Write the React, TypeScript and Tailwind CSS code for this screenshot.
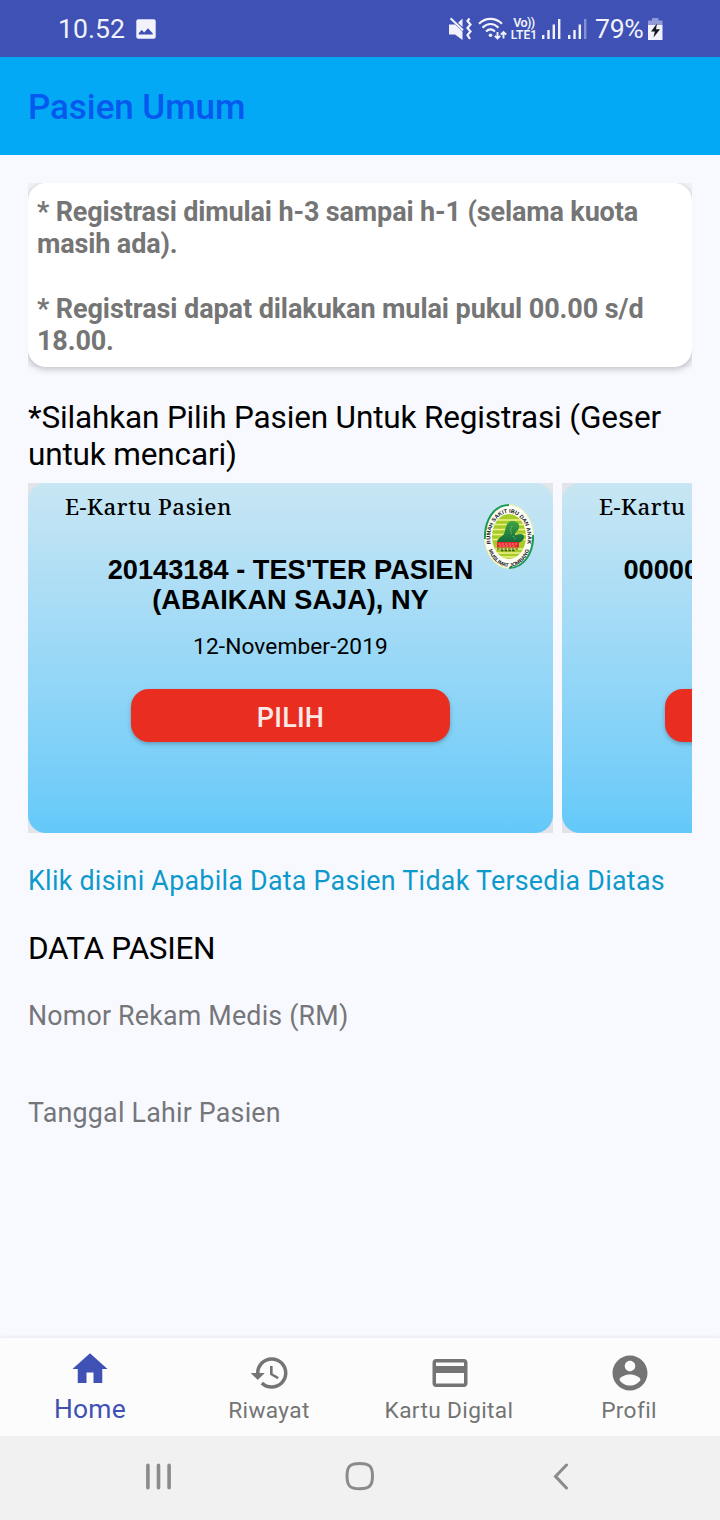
import type { ReactNode } from "react";

function StatusBar() {
  return (
    <div className="flex h-[57px] shrink-0 items-center bg-[#3f51b5] pl-[58px] text-[#f1f2fb]">
      <span className="w-[78px] pt-px text-[26.600px] leading-[58px] tracking-[0.050px]">10.52</span>
      <svg width="20" height="20" viewBox="0 0 20 20" className="mt-px">
        <rect x="0.3" y="0.3" width="19.4" height="19.4" rx="2" fill="#f1f2fb" />
        <path d="M2.800 15.500V14l3-3 2.400 2.600L12 9.200l4.800 5.300v1z" fill="#3f51b5" />
      </svg>
      <svg width="24" height="24" viewBox="0 0 24 24" className="ml-[293px] mt-px" fill="#f1f2fb">
        <path d="M0 7.500h6L13.500 14.500v8.500L6 17.500H0z" />
        <path d="M1.500 1.200 14 13.200" stroke="#f1f2fb" strokeWidth="2" />
        <path d="M13.500 1.500V10L9 5.800z" />
        <path d="M20.500 1.500 18.500 4l3 3.500-3 3.500 3 3.500-3 3.500 2.500 4" fill="none" stroke="#f1f2fb" strokeWidth="2.200" />
      </svg>
      <svg width="32" height="24" viewBox="0 0 32 24" className="ml-[5px] mt-px" fill="none" stroke="#f1f2fb" strokeWidth="2.200">
        <path d="M1 6.800C7.500 .2 17.500 .2 24 6.800" />
        <path d="M4.500 10.800C9.500 6 15.500 6 20.500 10.800" />
        <path d="M8 14.500C11 11.700 14 11.700 17 14.500" />
        <circle cx="12.500" cy="18.300" r="1.800" fill="#f1f2fb" stroke="none" />
        <path d="M19.500 15v6.500M16.800 18.800l2.700 2.700 2.700-2.700M25.500 21.500V15M22.800 17.700l2.700-2.700 2.700 2.700" strokeWidth="1.900" />
      </svg>
      <div className="flex w-[28px] flex-col items-center pt-[1px] text-[12.500px] font-semibold leading-[12px]">
        <span className="tracking-[-0.600px]">Vo))</span>
        <span className="text-[12px] tracking-[0.150px]">LTE1</span>
      </div>
      <svg width="46" height="22" viewBox="0 0 46 22" className="ml-[4px]" fill="#f1f2fb">
        <rect x="0" y="17" width="2.400" height="4" />
        <rect x="5.300" y="12" width="2.400" height="9" />
        <rect x="10.600" y="6.500" width="2.400" height="14.500" />
        <rect x="16" y="1" width="2.400" height="20" />
        <rect x="26" y="17" width="2.400" height="4" />
        <rect x="31.300" y="12" width="2.400" height="9" />
        <rect x="36.600" y="6.500" width="2.400" height="14.500" />
        <rect x="42" y="1" width="2.400" height="20" opacity="0.4" />
      </svg>
      <span className="ml-[7px] w-[53px] pt-px text-[26.600px] leading-[58px] tracking-[-0.300px]">79%</span>
      <svg width="15" height="22" viewBox="0 0 15 22">
        <path d="M4 0h6.500v2.500H14.500V8H0V2.500h4z" fill="#8f9ad6" />
        <path d="M0 7h14.500v15H0z" fill="#f1f2fb" />
        <path d="M9 5.500 3 13.500h3.800L5.500 19.500l6.500-8.200H8z" fill="#15171f" />
      </svg>
    </div>
  );
}

function HospitalLogo() {
  return (
    <svg width="50" height="65" viewBox="0 0 50 65">
      <defs>
        <clipPath id="logoCore">
          <ellipse cx="25" cy="32.500" rx="17" ry="22.500" />
        </clipPath>
        <linearGradient id="logoFigure" x1="0" y1="0" x2="0" y2="1">
          <stop offset="0" stopColor="#3fa345" />
          <stop offset="1" stopColor="#116b3c" />
        </linearGradient>
        <path id="logoTop" d="M7.500 43A18.800 25 0 1 1 42.500 43" />
        <path id="logoBottom" d="M3.500 42A22.300 28.500 0 0 0 46.500 42" />
      </defs>
      <ellipse cx="25" cy="32.500" rx="24.500" ry="31.800" fill="#fffef8" stroke="#eef0a0" strokeWidth="1" />
      <path d="M.9 35C.4 16 10 1 25 1" fill="none" stroke="#1c9a58" strokeWidth="2" />
      <path d="M49.100 31C49.500 49 40 64 25 64" fill="none" stroke="#1c9a58" strokeWidth="2" />
      <g clipPath="url(#logoCore)">
        <rect width="50" height="65" fill="#a6cc28" />
        <path d="M0 16h50M0 20.500h50M0 25.500h50M0 30.500h50M0 35.500h50M0 45h50M0 49h50M0 53h50" stroke="#eff08a" strokeWidth="1.700" />
      </g>
      <path d="M13 39c0-5 5-6 7-9 2-4 1-12 8-13 5 0 8 3 7 7-1 3-4 4-4 7 4-1 9-2 9 2 0 5-6 6-9 6z" fill="url(#logoFigure)" />
      <path d="M28 22l-1.500 4 1 4M29 32l3 4" fill="none" stroke="#a5d78f" strokeWidth="0.700" strokeDasharray="1.500 1" />
      <path d="M13 38h22v5.500H13z" fill="#e5282d" />
      <path d="M14.500 40h19M15.500 42h16" stroke="#f9b5aa" strokeWidth="0.800" strokeDasharray="2 1.300" />
      <path d="M13 45h22M17 46.800h14" stroke="#26391a" strokeWidth="1.100" strokeDasharray="2.500 1.200" />
      <text className="font-['Liberation_Sans'] text-[5.500px] font-bold" fill="#151515">
        <textPath href="#logoTop" startOffset="50%" textAnchor="middle">RUMAH SAKIT IBU DAN ANAK</textPath>
      </text>
      <text className="font-['Liberation_Sans'] text-[5.300px] font-bold" fill="#151515">
        <textPath href="#logoBottom" startOffset="50%" textAnchor="middle">MUSLIMAT JOMBANG</textPath>
      </text>
    </svg>
  );
}

function PatientCard({ children, date }: { children: ReactNode; date?: string }) {
  return (
    <div className="h-[350px] w-[525px] shrink-0 overflow-hidden bg-[#e3e4ea]">
      <div className="relative flex h-full flex-col rounded-[18px] bg-linear-to-b from-[#c8e6f3] to-[#63c9f9] pt-[9px] text-black">
        <div className="whitespace-nowrap pl-[37px] font-['Noto_Serif',serif] text-[22.300px] font-medium leading-[30px] tracking-[0.550px]">E-Kartu Pasien</div>
        <div className="absolute left-[456px] top-[21px]">
          <HospitalLogo />
        </div>
        <div className="mt-[33px] h-[60px] whitespace-nowrap text-center font-['Liberation_Sans',sans-serif] text-[27.200px] font-bold leading-[30px]">
          {children}
        </div>
        <div className="mt-[17px] h-[30px] text-center text-[22.700px] leading-[30px] tracking-[0.100px]">{date}</div>
        <button className="mx-auto mt-[27px] h-[53px] w-[319px] rounded-[18px] bg-[#e92e21] pt-[3px] text-[27px] font-medium leading-[53px] tracking-[0.200px] text-[#fbe9e7] shadow-[0_2px_4px_rgba(0,0,0,0.25)]">
          PILIH
        </button>
      </div>
    </div>
  );
}

const icons = {
  home: "M10 20v-6h4v6h5v-8h3L12 3 2 12h3v8z",
  history:
    "M13 3c-4.970 0-9 4.030-9 9H1l3.890 3.890.07.14L9 12H6c0-3.870 3.130-7 7-7s7 3.130 7 7-3.130 7-7 7c-1.930 0-3.680-.79-4.940-2.060l-1.420 1.420C8.270 19.990 10.510 21 13 21c4.970 0 9-4.030 9-9s-4.030-9-9-9zm-1 5v5l4.280 2.540.72-1.210-3.500-2.080V8H12z",
  card: "M20 4H4c-1.110 0-1.990.89-1.990 2L2 18c0 1.110.89 2 2 2h16c1.110 0 2-.89 2-2V6c0-1.110-.89-2-2-2zm0 14H4v-6h16v6zm0-10H4V6h16v2z",
  profile:
    "M12 2C6.480 2 2 6.480 2 12s4.480 10 10 10 10-4.480 10-10S17.520 2 12 2zm0 3c1.660 0 3 1.340 3 3s-1.340 3-3 3-3-1.340-3-3 1.340-3 3-3zm0 14.200c-2.500 0-4.710-1.280-6-3.220.03-1.990 4-3.080 6-3.080 1.990 0 5.970 1.090 6 3.080-1.290 1.940-3.500 3.220-6 3.220z",
};

function NavIcon({ d }: { d: string }) {
  return (
    <svg width="42" height="42" viewBox="0 0 24 24" fill="currentColor">
      <path d={d} />
    </svg>
  );
}

function NavItem({ label, icon }: { label: string; icon: string }) {
  return (
    <div className="flex flex-1 flex-col items-center pt-[14px] text-[#747474]">
      <NavIcon d={icon} />
      <span className="mt-[2px] -ml-[2px] text-[22.700px] leading-[30px] tracking-[0.350px]">{label}</span>
    </div>
  );
}

export default function App() {
  return (
    <div className="flex h-[1520px] w-[720px] flex-col overflow-hidden bg-[#f8f9ff] font-['Roboto',sans-serif]">
      <StatusBar />
      <header className="h-[98px] shrink-0 bg-[#03a9f5] pl-7 pt-[2px] text-[35px] font-medium leading-[98px] tracking-[-0.080px] text-[#0659ee]">Pasien Umum</header>
      <main className="flex min-h-0 flex-1 flex-col px-7 pt-7">
        <section className="h-[196px] shrink-0 overflow-hidden">
          <div className="bg-[#ebecf3]/60">
            <div className="h-[184px] whitespace-nowrap rounded-[18px] bg-white pl-[9px] pt-[12.800px] text-[27px] font-bold leading-[32.330px] tracking-[-0.140px] text-[#757575] shadow-[0_2px_7px_rgba(0,0,0,0.24)]">
              * Registrasi dimulai h-3 sampai h-1 (selama kuota
              <br />
              masih ada).
              <br />
              <br />
              <span className="tracking-[-0.080px]">* Registrasi dapat dilakukan mulai pukul 00.00 s/d</span>
              <br />
              18.00.
            </div>
          </div>
        </section>
        <h2 className="mt-5 shrink-0 whitespace-nowrap text-[31.500px] leading-[37px] tracking-[-0.150px] text-black">
          *Silahkan Pilih Pasien Untuk Registrasi (Geser
          <br />
          untuk mencari)
        </h2>
        <section className="mt-[10px] flex shrink-0 gap-[9px] overflow-hidden">
          <PatientCard date="12-November-2019">
            20143184 - TES'TER PASIEN
            <br />
            (ABAIKAN SAJA), NY
          </PatientCard>
          <PatientCard>
            <div className="pl-[61.500px] text-left">00000</div>
          </PatientCard>
        </section>
        <a className="mt-8 shrink-0 whitespace-nowrap text-[26.800px] leading-8 tracking-[0.280px] text-[#0d99cb]">
          Klik disini Apabila Data Pasien Tidak Tersedia Diatas
        </a>
        <h3 className="mt-[33px] text-[31.500px] leading-[37px] tracking-[-0.330px] text-black">DATA PASIEN</h3>
        <p className="mt-[33px] text-[26.800px] leading-8 tracking-[0.200px] text-[#75767a]">Nomor Rekam Medis (RM)</p>
        <p className="mt-[65px] text-[26.800px] leading-8 tracking-[0.220px] text-[#75767a]">Tanggal Lahir Pasien</p>
      </main>
      <nav className="flex h-[98px] shrink-0 bg-[#fcfcfc] shadow-[0_-1px_4px_rgba(0,0,0,0.07)]">
        <div className="flex flex-1 flex-col items-center pt-[10px] text-[#3f51b5]">
          <NavIcon d={icons.home} />
          <span className="mt-1 text-[26.400px] leading-[30px] tracking-[0.250px]">Home</span>
        </div>
        <NavItem label="Riwayat" icon={icons.history} />
        <NavItem label="Kartu Digital" icon={icons.card} />
        <NavItem label="Profil" icon={icons.profile} />
      </nav>
      <div className="flex h-[84px] shrink-0 items-center bg-[#f1f1f1] pl-[145px]">
        <svg width="28" height="28" viewBox="0 0 28 28" className="-mt-1" stroke="#8b8b8b" strokeWidth="3.600" strokeLinecap="round">
          <path d="M2.900 3.300v22.400M13.500 3.300v22.400M24.100 3.300v22.400" />
        </svg>
        <svg width="30" height="30" viewBox="0 0 30 30" className="ml-[171.500px] -mt-1" fill="none" stroke="#8b8b8b" strokeWidth="3">
          <path d="M14.750 2.500c9.500 0 12.750 2.500 12.750 12.500s-3.250 12.750-12.750 12.750S2 25.250 2 15.100 5.250 2.500 14.750 2.500z" />
        </svg>
        <svg width="18" height="28" viewBox="0 0 18 28" className="ml-[176.500px] -mt-1" fill="none" stroke="#8b8b8b" strokeWidth="3" strokeLinecap="round">
          <path d="M15.500 3 4.500 14.400 15.500 26" />
        </svg>
      </div>
    </div>
  );
}
